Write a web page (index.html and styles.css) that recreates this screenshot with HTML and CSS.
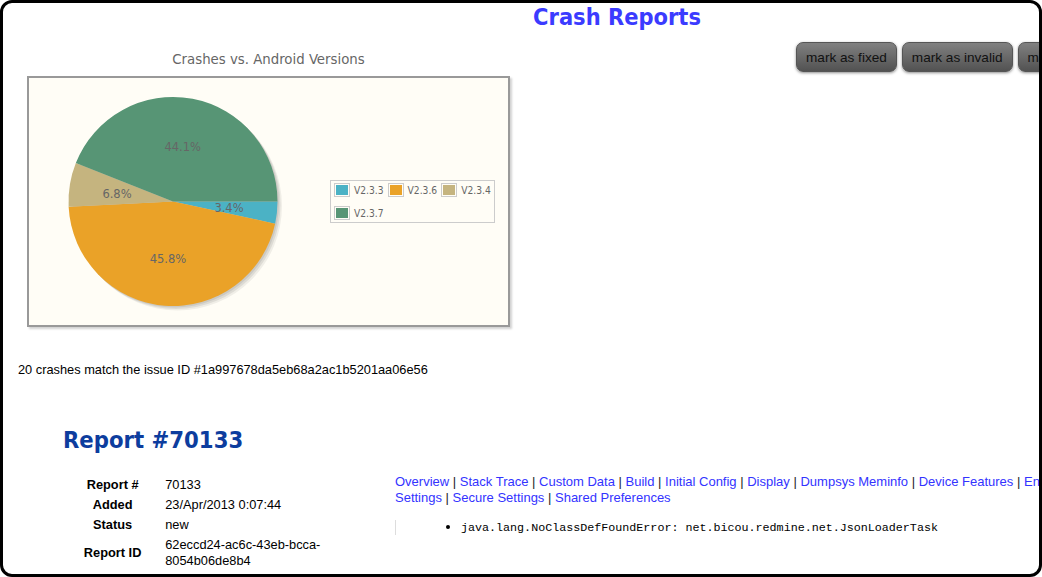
FILE: index.html
```html
<!DOCTYPE html>
<html>
<head>
<meta charset="utf-8">
<title>Crash Reports</title>
<link rel="stylesheet" href="styles.css">
</head>
<body>
<div class="frame">
  <div class="page">
    <h1 class="title">Crash Reports</h1>
    <div class="top">
      <div class="chart-col">
        <div class="chart-title">Crashes vs. Android Versions</div>
        <div class="chart">
          <svg class="pie" width="290" height="247" viewBox="0 0 290 247">
            <circle cx="145.5" cy="125" r="104.5" fill="rgba(0,0,0,0.08)"/>
            <circle cx="147" cy="126.5" r="104.5" fill="rgba(0,0,0,0.08)"/>
            <circle cx="148.5" cy="128" r="104.5" fill="rgba(0,0,0,0.06)"/>
            <path d="M144,123.5 L248.5,123.5 A104.5,104.5 0 0 1 246.12,145.66 Z" fill="#4bb2c5"/>
            <path d="M144,123.5 L246.12,145.66 A104.5,104.5 0 0 1 39.63,128.75 Z" fill="#eaa228"/>
            <path d="M144,123.5 L39.63,128.75 A104.5,104.5 0 0 1 46.84,85.03 Z" fill="#c5b47f"/>
            <path d="M144,123.5 L46.84,85.03 A104.5,104.5 0 0 1 248.5,123.5 Z" fill="#579575"/>
            <text class="pie-label" x="153.7" y="72.5">44.1%</text>
            <text class="pie-label" x="88" y="120">6.8%</text>
            <text class="pie-label" x="200" y="134">3.4%</text>
            <text class="pie-label" x="139" y="185">45.8%</text>
          </svg>
          <div class="legend">
            <div class="legend-item"><span class="swatch"><span class="swatch-fill c-blue"></span></span><span class="legend-text">V2.3.3</span></div>
            <div class="legend-item"><span class="swatch"><span class="swatch-fill c-orange"></span></span><span class="legend-text">V2.3.6</span></div>
            <div class="legend-item"><span class="swatch"><span class="swatch-fill c-tan"></span></span><span class="legend-text">V2.3.4</span></div>
            <div class="legend-item"><span class="swatch"><span class="swatch-fill c-green"></span></span><span class="legend-text">V2.3.7</span></div>
          </div>
        </div>
      </div>
      <div class="actions">
        <button class="btn">mark as fixed</button>
        <button class="btn">mark as invalid</button>
        <button class="btn">mark as duplicate</button>
      </div>
    </div>

    <p class="match">20 crashes match the issue ID #1a997678da5eb68a2ac1b5201aa06e56</p>

    <h2 class="report-title">Report #70133</h2>
    <div class="report">
      <table class="info">
        <tr><th>Report #</th><td>70133</td></tr>
        <tr><th>Added</th><td>23/Apr/2013 0:07:44</td></tr>
        <tr><th>Status</th><td>new</td></tr>
        <tr><th>Report ID</th><td>62eccd24-ac6c-43eb-bcca-8054b06de8b4</td></tr>
      </table>
      <div class="details">
        <div class="tabs">
          <a href="#">Overview</a> | <a href="#">Stack Trace</a> | <a href="#">Custom Data</a> | <a href="#">Build</a> | <a href="#">Initial Config</a> | <a href="#">Display</a> | <a href="#">Dumpsys Meminfo</a> | <a href="#">Device Features</a> | <a href="#">Environment</a> | <a href="#">System Settings</a> | <a href="#">Secure Settings</a> | <a href="#">Shared Preferences</a>
        </div>
        <div class="trace">
          <ul>
            <li>java.lang.NoClassDefFoundError: net.bicou.redmine.net.JsonLoaderTask</li>
          </ul>
        </div>
      </div>
    </div>
  </div>
</div>
</body>
</html>
```

FILE: styles.css
```css
html, body {
  margin: 0;
  padding: 0;
  background: #fff;
}
.frame {
  width: 1042px;
  height: 577px;
  box-sizing: border-box;
  border: 3px solid #000;
  border-radius: 12px;
  overflow: hidden;
  background: #fff;
}
.page {
  width: 1228px;
  font-family: "Liberation Sans", Arial, sans-serif;
  font-size: 12.8px;
  color: #000;
}
.title {
  margin: 0;
  height: 28px;
  line-height: 28px;
  text-align: center;
  font-family: "DejaVu Sans", "Open Sans", sans-serif;
  font-stretch: condensed;
  font-size: 23.4px;
  font-weight: bold;
  color: #3b3bff;
}
.top {
  display: flex;
  align-items: flex-start;
}
.chart-col {
  margin-left: 24px;
  padding-top: 18px;
  width: 483px;
}
.chart-title {
  height: 20px;
  line-height: 20px;
  text-align: center;
  font-family: "DejaVu Sans", sans-serif;
  font-stretch: condensed;
  font-size: 14.8px;
  color: #666;
  margin-bottom: 7px;
}
.chart {
  box-sizing: border-box;
  width: 483px;
  height: 251px;
  border: 2px solid #999;
  background: #fffdf6;
  box-shadow: 2px 2px 2px rgba(0,0,0,0.18);
  display: flex;
  align-items: center;
}
.pie {
  display: block;
  flex: none;
}
.pie-label {
  font-family: "DejaVu Sans", sans-serif;
  font-size: 11.5px;
  fill: #666;
  text-anchor: middle;
}
.legend {
  margin-left: 11px;
  border: 1px solid #ccc;
  padding: 2px 3px;
  display: grid;
  grid-template-columns: auto auto auto;
  column-gap: 4px;
  row-gap: 9px;
  background: #fffdf6;
}
.legend-item {
  display: flex;
  align-items: center;
  height: 14px;
}
.swatch {
  display: block;
  border: 1px solid #ccc;
  padding: 1px;
  margin-right: 4px;
}
.swatch-fill {
  display: block;
  width: 12px;
  height: 10px;
}
.c-blue { background: #4bb2c5; }
.c-orange { background: #eaa228; }
.c-tan { background: #c5b47f; }
.c-green { background: #579575; }
.legend-text {
  font-family: "DejaVu Sans", sans-serif;
  font-stretch: condensed;
  font-size: 10.2px;
  color: #666;
  white-space: nowrap;
}
.actions {
  margin-left: 286px;
  margin-top: 11px;
  display: flex;
  gap: 5px;
}
.btn {
  height: 30px;
  padding: 0 9px;
  border: 1px solid #555;
  border-radius: 7px;
  background: linear-gradient(#808080, #525252);
  box-shadow: 0 1px 3px rgba(0,0,0,0.45);
  font-family: "Liberation Sans", Arial, sans-serif;
  font-size: 13.6px;
  color: #111;
  white-space: nowrap;
}
.match {
  margin: 36px 0 0 15px;
  line-height: 14px;
}
.report-title {
  margin: 48px 0 0 60px;
  height: 30px;
  line-height: 30px;
  font-family: "DejaVu Sans", "Open Sans", sans-serif;
  font-stretch: condensed;
  font-size: 23.6px;
  font-weight: bold;
  color: #0d3d9e;
}
.report {
  display: flex;
  align-items: flex-start;
  margin-top: 20px;
  margin-left: 59px;
}
.info {
  border-collapse: collapse;
  width: 333px;
  flex: none;
  font-size: 12.8px;
}
.info th, .info td {
  padding: 2px;
  line-height: 16px;
  vertical-align: middle;
}
.info th {
  width: 98px;
  text-align: center;
  font-weight: bold;
}
.info td {
  text-align: left;
  width: 180px;
  padding-right: 51px;
}
.details {
  width: 775px;
  margin-top: -1px;
}
.tabs {
  line-height: 16px;
  font-size: 13px;
  color: #222;
}
.tabs a {
  color: #3333ff;
  text-decoration: none;
}
.trace {
  margin-top: 14px;
  border-left: 1px solid #ddd;
  height: 15px;
}
.trace ul {
  margin: 0;
  padding-left: 65px;
  font-family: "Liberation Mono", "Courier New", monospace;
  font-size: 11.7px;
  line-height: 15px;
}
.trace li::marker {
  font-size: 15px;
}
```
